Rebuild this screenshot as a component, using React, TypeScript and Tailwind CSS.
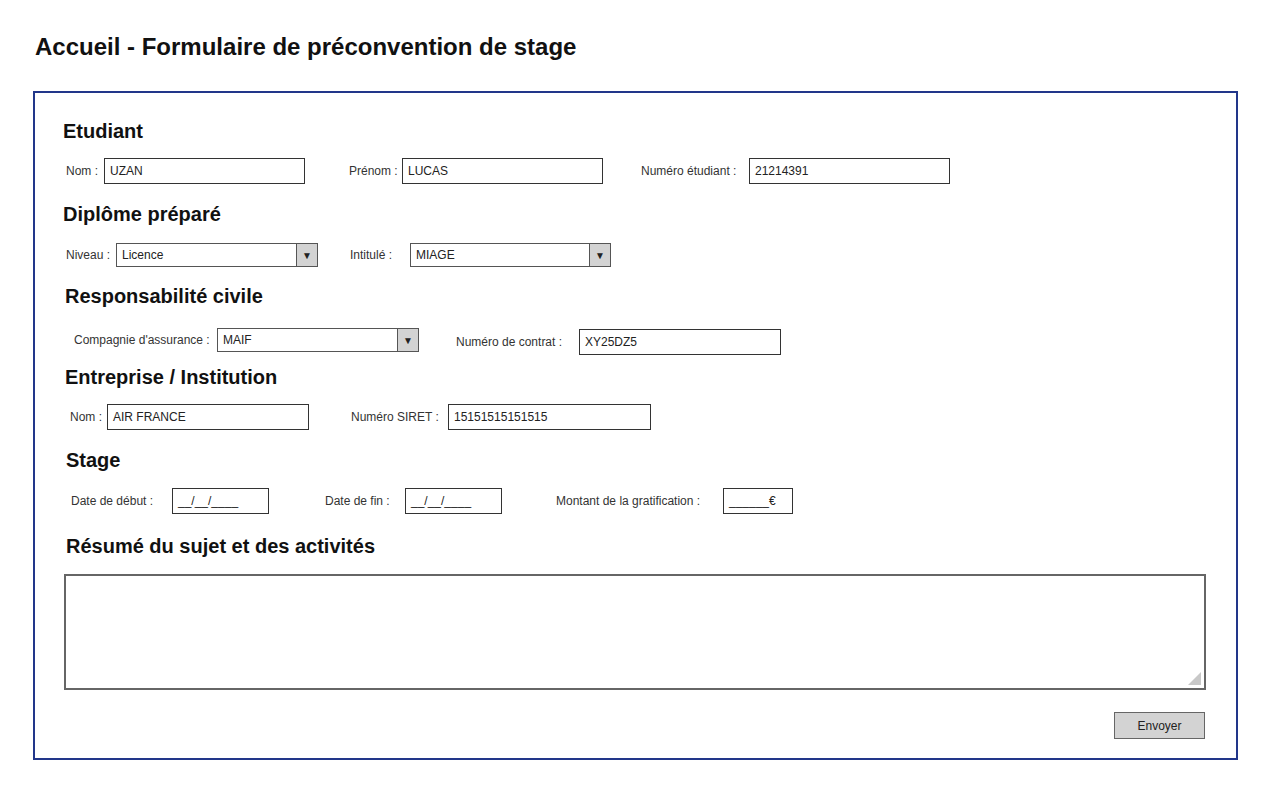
import React from 'react';

const label = "text-[12px] text-[#333] whitespace-nowrap shrink-0";
const box = "h-[26px] border border-[#333] bg-white flex items-center px-[5px] text-[12px] text-[#222] shrink-0";

function Field({ text, w, iw, value, ml = 0, right = false }: { text: string; w: number; iw: number; value: string; ml?: number; right?: boolean }) {
  return (
    <div className="flex items-center shrink-0" style={{ marginLeft: ml }}>
      <span className={label} style={{ width: w }}>{text}</span>
      <div className={box + (right ? ' justify-end' : '')} style={{ width: iw }}>{value}</div>
    </div>
  );
}

function Select({ text, w, iw, value, ml = 0 }: { text: string; w: number; iw: number; value: string; ml?: number }) {
  return (
    <div className="flex items-center shrink-0" style={{ marginLeft: ml }}>
      <span className={label} style={{ width: w }}>{text}</span>
      <div className="h-[24px] border border-[#555] bg-white flex text-[12px] text-[#222] shrink-0" style={{ width: iw }}>
        <span className="flex-1 flex items-center px-[5px]">{value}</span>
        <span className="w-[21px] border-l border-[#555] bg-[#d3d3d3] flex items-center justify-center text-[10px] text-[#222]">▼</span>
      </div>
    </div>
  );
}

function Heading({ children, ml, mt }: { children: React.ReactNode; ml: string; mt: string }) {
  return (
    <h2 className={`h-[24px] leading-[24px] text-[20px] font-bold text-[#111] ${ml} ${mt}`}>{children}</h2>
  );
}

export default function App() {
  return (
    <div className="w-[1280px] h-[800px] bg-white pt-[33px] pl-[33px]" style={{ fontFamily: '"Liberation Sans", Arial, sans-serif' }}>
      <h1 className="h-[28px] leading-[28px] text-[24px] font-bold text-[#111] ml-[2px]">
        Accueil - Formulaire de préconvention de stage
      </h1>

      <div className="mt-[30px] w-[1205px] h-[669px] border-2 border-[#22368a] flex flex-col">
        <Heading ml="ml-[28px]" mt="mt-[26px]">Etudiant</Heading>
        <div className="flex items-center mt-[15px] ml-[31px]">
          <Field text="Nom :" w={38} iw={201} value="UZAN" />
          <Field text="Prénom :" w={53} iw={201} value="LUCAS" ml={44} />
          <Field text="Numéro étudiant :" w={108} iw={201} value="21214391" ml={38} />
        </div>

        <Heading ml="ml-[28px]" mt="mt-[18px]">Diplôme préparé</Heading>
        <div className="flex items-center mt-[17px] ml-[31px]">
          <Select text="Niveau :" w={50} iw={202} value="Licence" />
          <Select text="Intitulé :" w={60} iw={201} value="MIAGE" ml={32} />
        </div>

        <Heading ml="ml-[30px]" mt="mt-[17px]">Responsabilité civile</Heading>
        <div className="flex items-start mt-[20px] ml-[39px]">
          <Select text="Compagnie d'assurance :" w={143} iw={202} value="MAIF" />
          <div className="mt-[1px]">
            <Field text="Numéro de contrat :" w={123} iw={202} value="XY25DZ5" ml={37} />
          </div>
        </div>

        <Heading ml="ml-[30px]" mt="mt-[10px]">Entreprise / Institution</Heading>
        <div className="flex items-center mt-[15px] ml-[35px]">
          <Field text="Nom :" w={37} iw={202} value="AIR FRANCE" />
          <Field text="Numéro SIRET :" w={97} iw={203} value="15151515151515" ml={42} />
        </div>

        <Heading ml="ml-[31px]" mt="mt-[18px]">Stage</Heading>
        <div className="flex items-center mt-[16px] ml-[36px]">
          <Field text="Date de début :" w={101} iw={97} value="__/__/____" />
          <Field text="Date de fin :" w={80} iw={97} value="__/__/____" ml={56} />
          <Field text="Montant de la gratification :" w={167} iw={70} value="______€" ml={54} />
        </div>

        <Heading ml="ml-[31px]" mt="mt-[20px]">Résumé du sujet et des activités</Heading>
        <div className="relative mt-[16px] ml-[29px] w-[1142px] h-[116px] border-2 border-[#666] bg-white">
          <svg className="absolute right-[3px] bottom-[3px]" width="13" height="13" viewBox="0 0 13 13">
            <polygon points="13,0 13,13 0,13" fill="#c8c8c8" />
          </svg>
        </div>

        <div className="flex justify-end mt-[22px] mr-[31px]">
          <button className="w-[91px] h-[27px] bg-[#d3d3d3] border border-[#666] text-[12px] text-[#222]">
            Envoyer
          </button>
        </div>
      </div>
    </div>
  );
}
